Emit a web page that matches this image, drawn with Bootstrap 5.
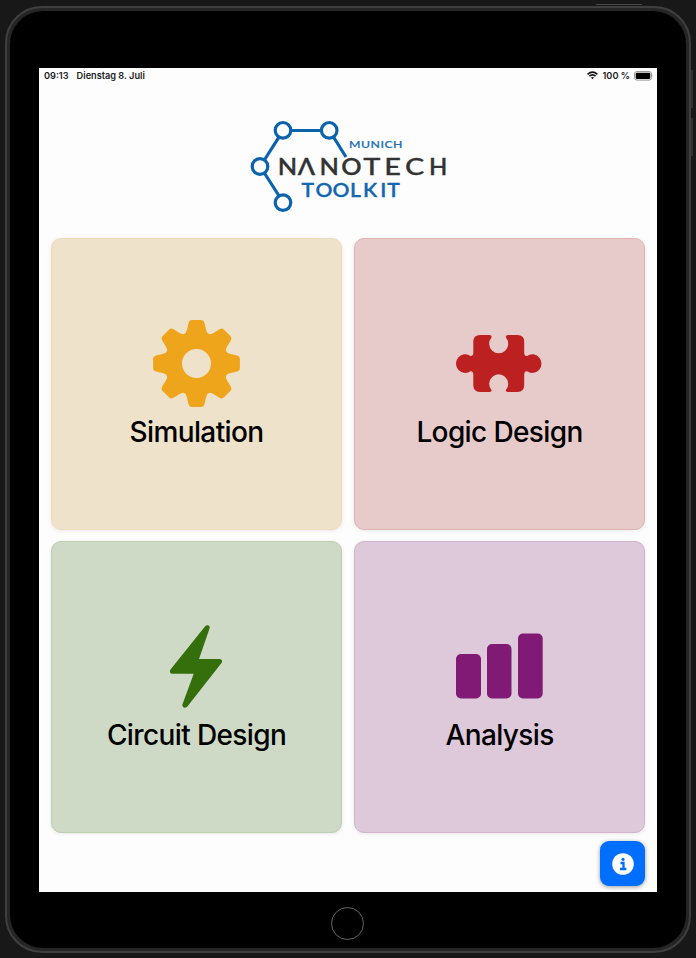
<!DOCTYPE html>
<html lang="de">
<head>
<meta charset="utf-8">
<meta name="viewport" content="width=device-width, initial-scale=1">
<title>Munich Nanotech Toolkit</title>
<link href="https://cdn.jsdelivr.net/npm/bootstrap@5.3.0/dist/css/bootstrap.min.css" rel="stylesheet">
<style>
  body { background: #181818; font-family: Inter, "Liberation Sans", sans-serif; width: 696px; height: 958px; padding: 6px 5px 5px; }
  .tablet { width: 686px; height: 947px; border: 2px solid #3f3f3f; border-radius: 37px; background: #252525; padding: 3px; }
  .bezel { border-radius: 33px; background: #000; padding: 57px 29px 0; height: 100%; }
  .side-key { background: #303030; }
  .key-top { left: 596px; top: 4px; width: 46px; height: 1px; background: #484848; }
  .key-up { left: 691px; top: 70px; width: 2px; height: 38px; }
  .key-down { left: 691px; top: 118px; width: 2px; height: 38px; }
  .display-area { width: 618px; height: 824px; background: #fdfdfd; }
  .status { height: 15px; padding: 0 3px 0 5px; font-size: 9.2px; line-height: 15px; font-weight: 600; color: #222; }
  .status svg { flex: none; }
  .brand { height: 155px; }
  .tiles { display: grid; grid-template-columns: 291.5px 291.5px; grid-auto-rows: 291.5px; gap: 11.5px; padding: 0 11.8px; }
  .tile { border-radius: 10px; border: 1px solid; box-shadow: 0 1px 4px rgba(0,0,0,.08); color: #000; }
  .tile svg { width: 87px; height: 87px; }
  .tile-name { font-size: 28px; line-height: 34px; font-weight: 500; letter-spacing: -.62px; padding-top: 8px; margin-bottom: -1px; white-space: nowrap; }
  .t-sim { background: #eee2cb; border-color: #ecdcbc; }
  .t-logic { background: #e7cbcb; border-color: #dfb3b2; }
  .t-circuit { background: #cfdac6; border-color: #bccfae; }
  .t-analysis { background: #dec9da; border-color: #d2b3cd; }
  .info-btn { width: 45px; height: 45px; border-radius: 9px; background: #006eff; border: 0; margin: 8.5px 12px 0 0; box-shadow: 0 1px 4px rgba(0,0,0,.4); }
  .home { width: 33px; height: 33px; border: 1.5px solid #666; margin-top: 14.5px; margin-left: 292px; }
</style>
<script src="https://cdn.jsdelivr.net/npm/bootstrap@5.3.0/dist/js/bootstrap.bundle.min.js"></script>
</head>
<body class="overflow-hidden position-relative m-0">
<i class="side-key key-top position-absolute"></i>
<i class="side-key key-up position-absolute"></i>
<i class="side-key key-down position-absolute"></i>
<div class="tablet">
  <div class="bezel">
    <main class="display-area d-flex flex-column">
      <header class="status d-flex align-items-center">
        <span>09:13</span><span class="ms-2">Dienstag 8. Juli</span>
        <svg class="ms-auto" width="11" height="9" viewBox="0 0 11 9" fill="none" stroke="#111" stroke-width="1.6"><path d="M.6 3.3Q5.5-1.1 10.4 3.3M2.4 5.2Q5.5 2.5 8.6 5.2"/><path d="M5.500 8.300 3.900 6.600Q5.500 5.400 7.100 6.600Z" fill="#111" stroke="none"/></svg>
        <span class="mx-1 ps-0">100 %</span>
        <svg width="20" height="10" viewBox="0 0 20 10"><rect x=".5" y=".5" width="17" height="8.600" rx="2.400" fill="none" stroke="#999"/><rect x="1.700" y="1.700" width="14.600" height="6.200" rx="1.200" fill="#000"/><path d="M18.600 3.300q1.200 1.500 0 3Z" fill="#888"/></svg>
      </header>
      <div class="brand">
        <svg class="d-block" width="618" height="155" viewBox="39 83 618 155">
          <g fill="none" stroke="#0b63ad" stroke-width="3.2">
            <path d="M278.800 137.300 264.700 159.500M292 130.500H320.500M333.800 137.500 346 157M264.700 173.500 278.800 195.500"/>
            <circle cx="283" cy="130.300" r="7.800"/><circle cx="329.200" cy="130.300" r="7.800"/>
            <circle cx="260" cy="166.500" r="7.800"/><circle cx="283" cy="202.600" r="7.800"/>
          </g>
          <g font-family="Lato, Inter, sans-serif" font-weight="600">
            <text x="349" y="148.300" font-size="10" letter-spacing=".4" fill="#2472b6" stroke="#2472b6" stroke-width=".15" textLength="54" lengthAdjust="spacingAndGlyphs">MUNICH</text>
            <g font-size="23" fill="#333" stroke="#333" stroke-width=".3">
              <text transform="translate(277.800 174.800) scale(1.1 1)" x="0 18.200 38 57.800">NΛNO</text>
              <text transform="translate(363.500 174.800) scale(1.26 1)" font-weight="500" x="-.2 16.400 33">TEC</text>
              <text transform="translate(429 174.800) scale(1.04 1)">H</text>
            </g>
            <text transform="translate(302 197.400) scale(1.16 1)" x="-.5 11.700 26.400 41.300 52.700 67.500 73.500" font-size="18.200" fill="#1167b1" stroke="#1167b1" stroke-width=".3">TOOLKIT</text>
          </g>
        </svg>
      </div>
      <section class="tiles">
        <div class="tile t-sim d-flex flex-column align-items-center justify-content-center">
          <svg viewBox="-43.5 -43.5 87 87" fill="#efa51b">
            <defs><path id="tooth" d="M-11.500-29.500Q-10-32-9.500-34L-8-40.500Q-7.200-43.400-4.500-43.400H4.500Q7.200-43.400 8-40.500L9.500-34Q10-32 11.500-29.500Z"/></defs>
            <use href="#tooth"/><use href="#tooth" transform="rotate(45)"/><use href="#tooth" transform="rotate(90)"/><use href="#tooth" transform="rotate(135)"/><use href="#tooth" transform="rotate(180)"/><use href="#tooth" transform="rotate(225)"/><use href="#tooth" transform="rotate(270)"/><use href="#tooth" transform="rotate(315)"/>
            <circle r="23.300" fill="none" stroke="#efa51b" stroke-width="17.600"/>
          </svg>
          <div class="tile-name">Simulation</div>
        </div>
        <div class="tile t-logic d-flex flex-column align-items-center justify-content-center">
          <svg viewBox="456 320 87 87" fill="#bd2020"><path d="M480 335H489.500Q492.500 335.500 491.300 337.800A9.500 9.500 0 1 0 506.100 337.800Q504.900 335.500 507.900 335H517.500Q524.200 335 524.200 341.700V353Q524.500 356.200 527 355.900A9.300 9.300 0 1 1 527 371.300Q524.500 371 524.200 374.300V385.300Q524.200 392 517.500 392H507.900Q504.900 391.500 506.100 389.800A9.500 9.500 0 1 0 491.300 389.800Q492.500 391.500 489.500 392H480Q473.300 392 473.300 385.300V374.300Q473 371 470.500 371.300A9.300 9.300 0 1 1 470.500 355.900Q473 356.200 473.300 353V341.700Q473.300 335 480 335Z"/></svg>
          <div class="tile-name">Logic Design</div>
        </div>
        <div class="tile t-circuit d-flex flex-column align-items-center justify-content-center">
          <svg viewBox="153 623 87 87" fill="#356f0c"><path d="M205.800 625.600Q209.700 624 209.700 628L199 659H220Q223.300 660 221.500 663L187.200 706.800Q183 709.500 182.200 705L193.700 673.700H172Q168.700 673 170.500 669.500Z"/></svg>
          <div class="tile-name">Circuit Design</div>
        </div>
        <div class="tile t-analysis d-flex flex-column align-items-center justify-content-center">
          <svg viewBox="456 623 87 87" fill="#801a74"><rect x="456" y="654" width="25" height="44.500" rx="5"/><rect x="487" y="644" width="24.500" height="54.500" rx="5"/><rect x="518" y="633.500" width="24.700" height="65" rx="5"/></svg>
          <div class="tile-name">Analysis</div>
        </div>
      </section>
      <button class="info-btn align-self-end d-flex align-items-center justify-content-center p-0" aria-label="Info">
        <svg width="22" height="22" viewBox="0 0 22 22"><circle cx="11" cy="11" r="10.800" fill="#fff"/><circle cx="11" cy="6.400" r="1.600" fill="#006eff"/><path d="M8.500 10H11.500V16M8 16H14.300" fill="none" stroke="#006eff" stroke-width="2.300"/></svg>
      </button>
    </main>
    <div class="home rounded-circle"></div>
  </div>
</div>
</body>
</html>
